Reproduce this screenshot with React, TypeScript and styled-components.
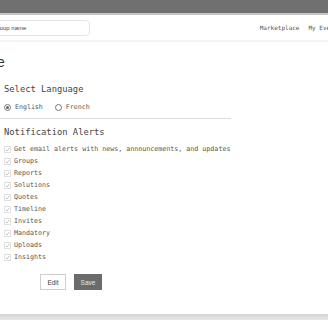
import styled, { createGlobalStyle } from "styled-components";

const GlobalStyle = createGlobalStyle`
  body {
    margin: 0;
    background: #ffffff;
    overflow: hidden;
  }
`

const Page = styled.div`
  width: 328px;
  height: 320px;
  display: flex;
  flex-direction: column;
  overflow: hidden;
  font-family: "DejaVu Sans Mono", monospace;
  color: #555;
`

const TopBar = styled.div`
  height: 13px;
  background: #707070;
  border-bottom: 2px solid #c4c4c4;
`

const Header = styled.header`
  height: 25px;
  display: flex;
  align-items: center;
  justify-content: space-between;
  border-bottom: 2px solid #f3f3f3;
`

const SearchInput = styled.input`
  width: 104px;
  height: 16px;
  margin-left: -14px;
  box-sizing: border-box;
  border: 1px solid #e4e4e4;
  border-radius: 4px;
  padding: 0 6px;
  font-family: "Liberation Sans", Arial, sans-serif;
  font-size: 6px;
  color: #444;
  outline: none;

  &::placeholder {
    color: #444;
  }
`

const Nav = styled.nav`
  display: flex;
  gap: 9px;
  margin-right: -13px;
`

const NavLink = styled.span`
  font-size: 6px;
  color: #555;
  white-space: nowrap;
`

const Main = styled.main`
  padding: 0 0 0 4px;
  display: flex;
  flex-direction: column;
`

const Title = styled.h1`
  margin: 12px 0 0 -39px;
  font-family: "Liberation Sans", Arial, sans-serif;
  font-weight: 400;
  font-size: 14px;
  line-height: 16px;
  color: #333;
`

const SectionTitle = styled.h2`
  margin: ${p => p.$top}px 0 0;
  font-weight: 400;
  font-size: 8.8px;
  line-height: 12px;
  color: #444;
`

const RadioRow = styled.div`
  display: flex;
  align-items: center;
  gap: 12px;
  margin-top: 6px;
  height: 12px;
`

const RadioLabel = styled.label`
  display: flex;
  align-items: center;
  gap: 4px;
  font-size: 6.6px;
  color: #555;
`

const RadioDot = styled.span`
  width: 7px;
  height: 7px;
  box-sizing: border-box;
  border-radius: 50%;
  border: 1px solid #777;
  display: flex;
  align-items: center;
  justify-content: center;

  &::after {
    content: "";
    width: 3px;
    height: 3px;
    border-radius: 50%;
    background: ${p => (p.$on ? "#666" : "transparent")};
  }
`

const Divider = styled.hr`
  width: 231px;
  margin: 5px 0 0 -4px;
  border: none;
  border-top: 1px solid #dedede;
`

const CheckList = styled.ul`
  list-style: none;
  margin: 5px 0 0;
  padding: 0;
  display: flex;
  flex-direction: column;
`

const CheckItem = styled.li`
  height: 12px;
  display: flex;
  align-items: center;
  gap: 3px;
  font-size: 6.67px;
  color: #555;
  white-space: nowrap;
`

const Box = styled.span`
  width: 7px;
  height: 7px;
  box-sizing: border-box;
  border: 1px solid #e0e0e0;
  display: flex;
  align-items: center;
  justify-content: center;
`

const Actions = styled.div`
  display: flex;
  gap: 8px;
  margin: 11px 0 0 36px;
`

const Button = styled.button`
  width: ${p => (p.$primary ? 28 : 26)}px;
  height: 16px;
  padding: 0;
  box-sizing: border-box;
  border: 1px solid ${p => (p.$primary ? "#6b6b6b" : "#cfcfcf")};
  background: ${p => (p.$primary ? "#6b6b6b" : "#fff")};
  color: ${p => (p.$primary ? "#e6e6e6" : "#444")};
  font-family: "Liberation Sans", Arial, sans-serif;
  font-size: 6.5px;
`

const Footer = styled.div`
  margin-top: auto;
  height: 6px;
  background: linear-gradient(#d4d4d4, #e8e8e8);
`

const Check = () => (
  <svg width="5" height="5" viewBox="0 0 10 10">
    <path d="M1.5 5.5 L4 8 L8.5 2" fill="none" stroke="#9a9a9a" strokeWidth="1.2" />
  </svg>
)

const alerts = [
  "Get email alerts with news, announcements, and updates",
  "Groups",
  "Reports",
  "Solutions",
  "Quotes",
  "Timeline",
  "Invites",
  "Mandatory",
  "Uploads",
  "Insights",
]

export default function App() {
  return (
    <Page>
      <GlobalStyle />
      <TopBar />
      <Header>
        <SearchInput placeholder="Group name" />
        <Nav>
          <NavLink>Marketplace</NavLink>
          <NavLink>My Events</NavLink>
        </Nav>
      </Header>
      <Main>
        <Title>Profile</Title>
        <SectionTitle $top={13}>Select Language</SectionTitle>
        <RadioRow>
          <RadioLabel>
            <RadioDot $on />
            English
          </RadioLabel>
          <RadioLabel>
            <RadioDot />
            French
          </RadioLabel>
        </RadioRow>
        <Divider />
        <SectionTitle $top={7}>Notification Alerts</SectionTitle>
        <CheckList>
          {alerts.map(a => (
            <CheckItem key={a}>
              <Box>
                <Check />
              </Box>
              {a}
            </CheckItem>
          ))}
        </CheckList>
        <Actions>
          <Button>Edit</Button>
          <Button $primary>Save</Button>
        </Actions>
      </Main>
      <Footer />
    </Page>
  );
}
